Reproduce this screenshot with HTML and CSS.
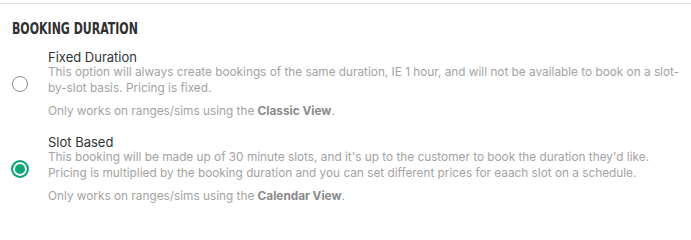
FILE: index.html
```html
<!DOCTYPE html>
<html>
<head>
<meta charset="utf-8">
<link rel="stylesheet" href="styles.css">
</head>
<body>
<section class="section">
  <h2 class="title"><span class="title-text">BOOKING DURATION</span></h2>
  <div class="options">
    <label class="option">
      <span class="radio"></span>
      <span class="text">
        <span class="name">Fixed Duration</span>
        <span class="desc">This option will always create bookings of the same duration, IE 1 hour, and will not be available to book on a slot-by-slot basis. Pricing is fixed.</span>
        <span class="note">Only works on ranges/sims using the <b>Classic View</b>.</span>
      </span>
    </label>
    <label class="option">
      <span class="radio checked"></span>
      <span class="text">
        <span class="name">Slot Based</span>
        <span class="desc">This booking will be made up of 30 minute slots, and it's up to the customer to book the duration they'd like. Pricing is multiplied by the booking duration and you can set different prices for eaach slot on a schedule.</span>
        <span class="note">Only works on ranges/sims using the <b>Calendar View</b>.</span>
      </span>
    </label>
  </div>
</section>
</body>
</html>
```
FILE: styles.css
```css
html, body {
  margin: 0;
  padding: 0;
  background: #fff;
}
body {
  font-family: Inter, "Noto Sans", sans-serif;
  padding-top: 3px;
}
.section {
  border-top: 1px solid #e3e3e3;
  padding: 0 4px 0 12px;
}
.title {
  margin: 0;
  padding-top: 14px;
  font-family: "DejaVu Sans Condensed", "DejaVu Sans", sans-serif;
  font-stretch: condensed;
  font-weight: 700;
  font-size: 16.5px;
  line-height: 22px;
  color: #303030;
  white-space: nowrap;
}
.title-text {
  display: inline-block;
  transform: scaleX(0.74);
  transform-origin: left center;
}
.options {
  display: flex;
  flex-direction: column;
  gap: 15px;
  padding-top: 9px;
}
.option {
  display: flex;
  align-items: center;
  gap: 20px;
}
.radio {
  flex: none;
  width: 16px;
  height: 16px;
  box-sizing: border-box;
  border: 1px solid #8a8a8a;
  border-radius: 50%;
  background: #fff;
}
.radio.checked {
  width: 18px;
  height: 18px;
  margin-left: -1px;
  margin-right: -1px;
  border: 2px solid #0aa678;
  background: #0aa678;
  box-shadow: inset 0 0 0 2px #fff;
}
.text {
  display: flex;
  flex-direction: column;
  font-size: 11.8px;
  line-height: 15.5px;
}
.name {
  color: #333;
  font-size: 13px;
  line-height: 16px;
}
.desc {
  color: #a3a3a3;
}
.note {
  color: #a3a3a3;
  margin-top: 7.5px;
}
.note b {
  color: #8a8a8a;
  font-weight: 700;
}
```
